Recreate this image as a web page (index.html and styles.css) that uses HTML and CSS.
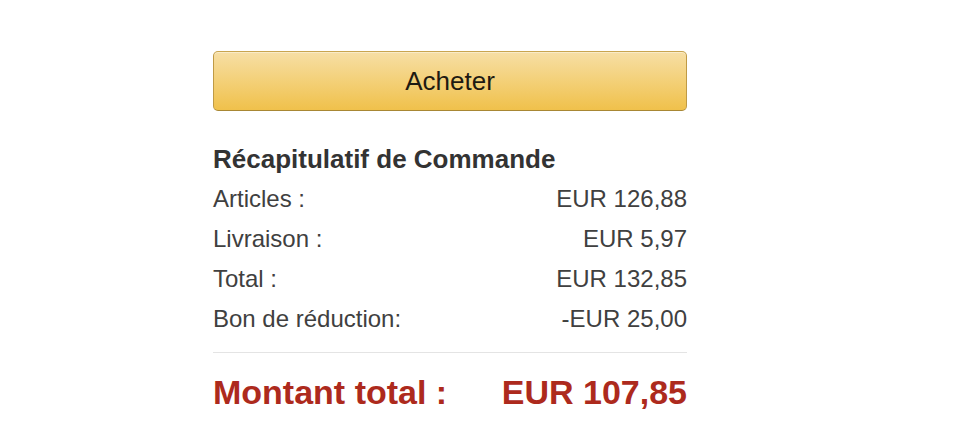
FILE: index.html
```html
<!DOCTYPE html>
<html lang="fr">
<head>
<meta charset="utf-8">
<title>Récapitulatif de Commande</title>
<link rel="stylesheet" href="styles.css">
</head>
<body>
<div class="box">
  <button class="buy">Acheter</button>
  <h2 class="title">Récapitulatif de Commande</h2>
  <div class="row"><span>Articles :</span><span>EUR 126,88</span></div>
  <div class="row"><span>Livraison :</span><span>EUR 5,97</span></div>
  <div class="row"><span>Total :</span><span>EUR 132,85</span></div>
  <div class="row"><span>Bon de réduction:</span><span>-EUR 25,00</span></div>
  <div class="grand"><span>Montant total :</span><span>EUR 107,85</span></div>
</div>
</body>
</html>
```
FILE: styles.css
```css
html, body {
  margin: 0;
  padding: 0;
  background: #fff;
}
body {
  font-family: "Liberation Sans", Arial, sans-serif;
  color: #333;
}
.box {
  width: 474px;
  margin-left: 213px;
  padding-top: 51px;
  display: flex;
  flex-direction: column;
}
.buy {
  height: 60px;
  width: 100%;
  box-sizing: border-box;
  border: 1px solid;
  border-color: #c9a54f #bf9a45 #a88734;
  border-radius: 5px;
  background: linear-gradient(to bottom, #f7dfa5, #f0c14b);
  box-shadow: inset 0 1px 0 rgba(255,255,255,0.4);
  font-family: "Liberation Sans", Arial, sans-serif;
  font-size: 26px;
  color: #1e1a12;
  padding: 0;
  margin: 0;
}
.title {
  margin: 28px 0 0;
  font-size: 26px;
  line-height: 40px;
  font-weight: bold;
  color: #333;
}
.row {
  display: flex;
  justify-content: space-between;
  font-size: 24px;
  line-height: 40px;
  color: #404040;
}
.grand {
  display: flex;
  justify-content: space-between;
  margin-top: 13px;
  border-top: 1px solid #e4e4e4;
  padding-top: 14px;
  font-size: 34px;
  line-height: 50px;
  font-weight: bold;
  color: #ad2a1d;
}
```
